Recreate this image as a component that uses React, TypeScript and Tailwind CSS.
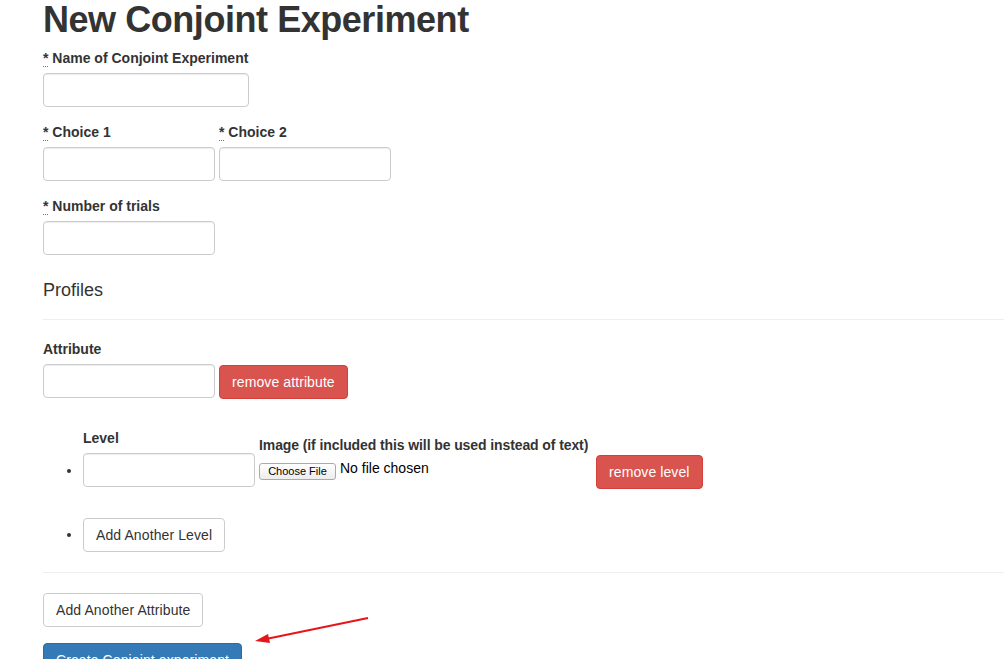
import React from "react";

const font = { fontFamily: '"Liberation Sans", Arial, Helvetica, sans-serif' };

function Req() {
  return <span className="border-b border-dotted border-[#777] leading-none">*</span>;
}

function Label({ children, req = true }: { children: React.ReactNode; req?: boolean }) {
  return (
    <label className="block mb-[5px] text-[14px] leading-[20px] font-bold text-[#333]">
      {req && (
        <>
          <Req />{" "}
        </>
      )}
      {children}
    </label>
  );
}

function Input({ w }: { w: string }) {
  return (
    <input
      type="text"
      className={`${w} h-[34px] rounded-[4px] border border-[#ccc] bg-white px-3 text-[14px] shadow-[inset_0_1px_1px_rgba(0,0,0,0.075)] outline-none`}
    />
  );
}

function Btn({ kind, children }: { kind: "default" | "danger" | "primary"; children: React.ReactNode }) {
  const cls =
    kind === "default"
      ? "bg-white border-[#ccc] text-[#333]"
      : kind === "danger"
      ? "bg-[#d9534f] border-[#d43f3a] text-white"
      : "bg-[#337ab7] border-[#2e6da4] text-white";
  return (
    <button
      type="button"
      className={`${cls} h-[34px] px-3 rounded-[4px] border text-[14px] leading-[20px] whitespace-nowrap tracking-[0.1px]`}
    >
      {children}
    </button>
  );
}

function Bullet({ top }: { top: string }) {
  return (
    <div className={`-ml-[40px] w-[40px] shrink-0 flex justify-end pr-[12px] ${top}`}>
      <span className="block w-[4px] h-[4px] rounded-full bg-[#333]" />
    </div>
  );
}

export default function App() {
  return (
    <div className="relative min-h-[659px] bg-white text-[#333] overflow-hidden" style={font}>
      <div className="pl-[43px]">
        <h1 className="text-[36px] leading-[40px] font-bold mb-[8px] text-[#333] tracking-[-0.45px]">
          New Conjoint Experiment
        </h1>

        <div className="mb-[15px]">
          <Label>Name of Conjoint Experiment</Label>
          <Input w="w-[206px]" />
        </div>

        <div className="mb-[15px] flex gap-[4px]">
          <div>
            <Label>Choice 1</Label>
            <Input w="w-[172px]" />
          </div>
          <div>
            <Label>Choice 2</Label>
            <Input w="w-[172px]" />
          </div>
        </div>

        <div className="mb-[15px]">
          <Label>Number of trials</Label>
          <Input w="w-[172px]" />
        </div>

        <h4 className="text-[18px] leading-[20px] font-normal mt-[25px] text-[#333]">Profiles</h4>
        <hr className="mt-[19px] mb-[19px] border-0 border-t border-[#eee]" />

        <div>
          <Label req={false}>Attribute</Label>
          <div className="flex items-start gap-[4px]">
            <Input w="w-[172px]" />
            <div className="mt-px">
              <Btn kind="danger">remove attribute</Btn>
            </div>
          </div>
        </div>

        <ul className="mt-[29px] pl-[40px]">
          <li className="flex items-start">
            <Bullet top="mt-[41px]" />
            <div>
              <Label req={false}>Level</Label>
              <Input w="w-[172px]" />
            </div>
            <div className="ml-[4px] w-[337px] shrink-0 mt-[7px]">
              <label className="block text-[14px] leading-[20px] font-bold mb-[8px] whitespace-nowrap tracking-[-0.1px]">
                Image (if included this will be used instead of text)
              </label>
              <div className="flex items-start">
                <span className="inline-flex items-center justify-center h-[17px] w-[77px] rounded-[3px] border border-[#aaa] bg-gradient-to-b from-white to-[#ededed] text-[11px] text-black">
                  Choose File
                </span>
                <span className="ml-[4px] text-[14px] leading-[17px] -mt-[3px] text-black">No file chosen</span>
              </div>
            </div>
            <div className="mt-[27px]">
              <Btn kind="danger">remove level</Btn>
            </div>
          </li>
          <li className="flex items-start mt-[29px]">
            <Bullet top="mt-[15px]" />
            <Btn kind="default">Add Another Level</Btn>
          </li>
        </ul>

        <hr className="mt-[20px] mb-[20px] border-0 border-t border-[#eee]" />

        <Btn kind="default">Add Another Attribute</Btn>
        <div className="mt-[16px]">
          <Btn kind="primary">Create Conjoint experiment</Btn>
        </div>
      </div>

      <svg className="absolute left-0 top-0 pointer-events-none" width="1004" height="659">
        <line x1="368" y1="618" x2="266" y2="639" stroke="#e8141b" strokeWidth="2" />
        <polygon points="255,641 268,634 270,643" fill="#e8141b" />
      </svg>
    </div>
  );
}
